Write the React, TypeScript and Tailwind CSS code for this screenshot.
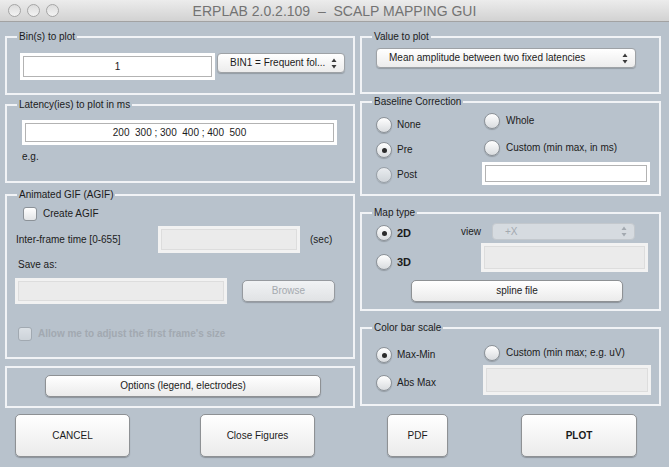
import React from "react";

type Kids = { children?: React.ReactNode; className?: string };

function Panel({ label, className = "", children }: Kids & { label: string }) {
  return (
    <fieldset className={`min-w-0 border-2 border-[#f1f3f6] ${className}`}>
      <legend className="ml-[10px] px-[2px] text-[10px] leading-[12px]">{label}</legend>
      {children}
    </fieldset>
  );
}

function Button({ className = "", children, disabled }: Kids & { disabled?: boolean }) {
  return (
    <div
      className={`flex items-center justify-center rounded-[5px] border border-[#8e9194] bg-linear-to-b from-white to-[#ebebeb] shadow-[0_1px_1px_rgba(0,0,0,0.25)] ${
        disabled ? "text-[#a0a4a8] opacity-80" : "text-[#1b1b1b]"
      } ${className}`}
    >
      {children}
    </div>
  );
}

function TextBox({ className = "", children, disabled }: Kids & { disabled?: boolean }) {
  return (
    <div className={`p-[3px] ${disabled ? "bg-[#f2f2f2]" : "bg-white"} ${className}`}>
      <div
        className={`flex h-full w-full items-center justify-center border ${
          disabled ? "border-[#dddddd] bg-[#ebebeb]" : "border-[#b3b3b3] bg-white"
        }`}
      >
        {children}
      </div>
    </div>
  );
}

function Arrows({ color = "#3a3a3a" }: { color?: string }) {
  return (
    <svg width="6" height="11" viewBox="0 0 6 11" className="mr-[7px]">
      <path d="M3 0.5 L5.5 4 L0.5 4 Z" fill={color} />
      <path d="M3 10.5 L5.5 7 L0.5 7 Z" fill={color} />
    </svg>
  );
}

function Popup({ className = "", children, disabled }: Kids & { disabled?: boolean }) {
  return (
    <div
      className={`flex items-center rounded-[4px] border ${
        disabled
          ? "border-[#c3c8cd] bg-[#d6dbe0] text-[#a3a9b0]"
          : "border-[#9ea2a6] bg-linear-to-b from-white to-[#ececec] text-[#1b1b1b] shadow-[0_1px_1px_rgba(0,0,0,0.2)]"
      } ${className}`}
    >
      <span className="flex-1 truncate pl-[12px]">{children}</span>
      <Arrows color={disabled ? "#a3a9b0" : "#3a3a3a"} />
    </div>
  );
}

function Radio({ checked, faded }: { checked?: boolean; faded?: boolean }) {
  return (
    <div
      className={`flex h-[16px] w-[16px] shrink-0 items-center justify-center rounded-full border border-[#8c9298] bg-linear-to-b from-white to-[#d9dcdf] shadow-[0_1px_1px_rgba(0,0,0,0.2)] ${
        faded ? "opacity-70" : ""
      }`}
    >
      {checked && <div className="h-[5px] w-[5px] rounded-full bg-[#2b2b2b]" />}
    </div>
  );
}

function Check({ disabled }: { disabled?: boolean }) {
  return (
    <div
      className={`h-[14px] w-[14px] shrink-0 rounded-[3px] border border-[#8c9298] bg-linear-to-b from-white to-[#e3e5e7] ${
        disabled ? "opacity-50" : ""
      }`}
    />
  );
}

function Light() {
  return (
    <div className="h-[13px] w-[13px] rounded-full border border-[#a5a5a5] bg-linear-to-b from-[#dcdcdc] to-[#f3f3f3]" />
  );
}

export default function App() {
  return (
    <div className="h-[467px] w-[669px] overflow-hidden bg-[#b8c2cc] font-['Liberation_Sans',Arial,sans-serif] text-[10px] leading-[12px] text-[#1b1b1b]">
      {/* title bar */}
      <div className="relative flex h-[22px] items-center border-b border-[#a2a2a2] bg-linear-to-b from-[#ececec] to-[#d2d2d2]">
        <div className="flex gap-[6px] pl-[8px]">
          <Light />
          <Light />
          <Light />
        </div>
        <div className="absolute inset-0 flex items-center justify-center whitespace-pre text-[14px] text-[#737373]">
          ERPLAB 2.0.2.109  –  SCALP MAPPING GUI
        </div>
      </div>

      <div className="flex gap-[5px] px-[5px]">
        {/* left column */}
        <div className="flex w-[350px] flex-col">
          <Panel label="Bin(s) to plot" className="mt-[9px] h-[64px]">
            <div className="mt-[10px] flex items-start">
              <TextBox className="ml-[13px] h-[27px] w-[195px]">1</TextBox>
              <Popup className="ml-[2px] h-[20px] w-[128px]">BIN1 = Frequent fol...</Popup>
            </div>
          </Panel>

          <Panel label="Latency(ies) to plot in ms" className="mt-[4px] h-[84px]">
            <TextBox className="ml-[15px] mt-[9px] h-[25px] w-[315px]">
              <span className="whitespace-pre">200  300 ; 300  400 ; 400  500</span>
            </TextBox>
            <div className="ml-[15px] mt-[6px]">e.g.</div>
          </Panel>

          <Panel label="Animated GIF (AGIF)" className="mt-[6px] h-[170px]">
            <div className="mt-[6px] flex h-[14px] items-center">
              <div className="ml-[16px]">
                <Check />
              </div>
              <span className="ml-[6px]">Create AGIF</span>
            </div>
            <div className="mt-[5px] flex h-[27px] items-center">
              <span className="ml-[9px] w-[142px]">Inter-frame time [0-655]</span>
              <TextBox disabled className="h-[27px] w-[142px]" />
              <span className="ml-[10px]">(sec)</span>
            </div>
            <div className="ml-[11px] mt-[6px]">Save as:</div>
            <div className="mt-[7px] flex items-start">
              <TextBox disabled className="ml-[8px] h-[26px] w-[212px]" />
              <Button disabled className="ml-[15px] mt-[2px] h-[22px] w-[93px]">
                Browse
              </Button>
            </div>
            <div className="mt-[23px] flex h-[13px] items-center">
              <div className="ml-[11px]">
                <Check disabled />
              </div>
              <span className="ml-[6px] font-bold text-[#a2a9b1]">
                Allow me to adjust the first frame's size
              </span>
            </div>
          </Panel>

          <div className="mt-[7px] h-[42px] border-2 border-[#f1f3f6]">
            <Button className="ml-[38px] mt-[7px] h-[22px] w-[276px]">Options (legend, electrodes)</Button>
          </div>
        </div>

        {/* right column */}
        <div className="flex w-[301px] flex-col">
          <Panel label="Value to plot" className="mt-[9px] h-[63px]">
            <Popup className="ml-[14px] mt-[5px] h-[20px] w-[260px]">
              Mean amplitude between two fixed latencies
            </Popup>
          </Panel>

          <Panel label="Baseline Correction" className="mt-[2px] h-[100px]">
            <div className="flex">
              <div className="ml-[14px] flex w-[106px] flex-col">
                <div className="mt-[9px] flex items-center">
                  <Radio />
                  <span className="ml-[5px]">None</span>
                </div>
                <div className="mt-[9px] flex items-center">
                  <Radio checked />
                  <span className="ml-[5px]">Pre</span>
                </div>
                <div className="mt-[9px] flex items-center">
                  <Radio faded />
                  <span className="ml-[5px]">Post</span>
                </div>
              </div>
              <div className="flex flex-col">
                <div className="ml-[2px] mt-[5px] flex items-center">
                  <Radio />
                  <span className="ml-[6px]">Whole</span>
                </div>
                <div className="ml-[2px] mt-[11px] flex items-center">
                  <Radio />
                  <span className="ml-[6px]">Custom (min max, in ms)</span>
                </div>
                <TextBox className="mt-[6px] h-[23px] w-[168px]" />
              </div>
            </div>
          </Panel>

          <Panel label="Map type" className="mt-[11px] h-[104px]">
            <div className="flex">
              <div className="ml-[14px] flex w-[85px] flex-col">
                <div className="mt-[6px] flex items-center">
                  <Radio checked />
                  <span className="ml-[5px] text-[11px] font-semibold">2D</span>
                </div>
                <div className="mt-[13px] flex items-center">
                  <Radio />
                  <span className="ml-[5px] text-[11px] font-semibold">3D</span>
                </div>
              </div>
              <div className="flex flex-col">
                <div className="mt-[4px] flex items-center">
                  <span className="w-[31px]">view</span>
                  <Popup disabled className="h-[17px] w-[143px]">
                    +X
                  </Popup>
                </div>
                <TextBox disabled className="ml-[20px] mt-[3px] h-[29px] w-[167px]" />
              </div>
            </div>
            <Button className="ml-[49px] mt-[8px] h-[22px] w-[212px]">spline file</Button>
          </Panel>

          <Panel label="Color bar scale" className="mt-[11px] h-[84px]">
            <div className="flex">
              <div className="ml-[14px] flex w-[107px] flex-col">
                <div className="mt-[13px] flex items-center">
                  <Radio checked />
                  <span className="ml-[5px]">Max-Min</span>
                </div>
                <div className="mt-[12px] flex items-center">
                  <Radio />
                  <span className="ml-[5px]">Abs Max</span>
                </div>
              </div>
              <div className="flex flex-col">
                <div className="ml-[1px] mt-[11px] flex items-center">
                  <Radio />
                  <span className="ml-[6px]">Custom (min max; e.g. uV)</span>
                </div>
                <TextBox disabled className="mt-[4px] h-[30px] w-[168px]" />
              </div>
            </div>
          </Panel>
        </div>
      </div>

      {/* bottom buttons */}
      <div className="mt-[6px] flex">
        <Button className="ml-[15px] h-[43px] w-[115px]">CANCEL</Button>
        <Button className="ml-[70px] h-[43px] w-[115px]">Close Figures</Button>
        <Button className="ml-[72px] h-[43px] w-[61px]">PDF</Button>
        <Button className="ml-[73px] h-[43px] w-[116px] font-bold">PLOT</Button>
      </div>
    </div>
  );
}
